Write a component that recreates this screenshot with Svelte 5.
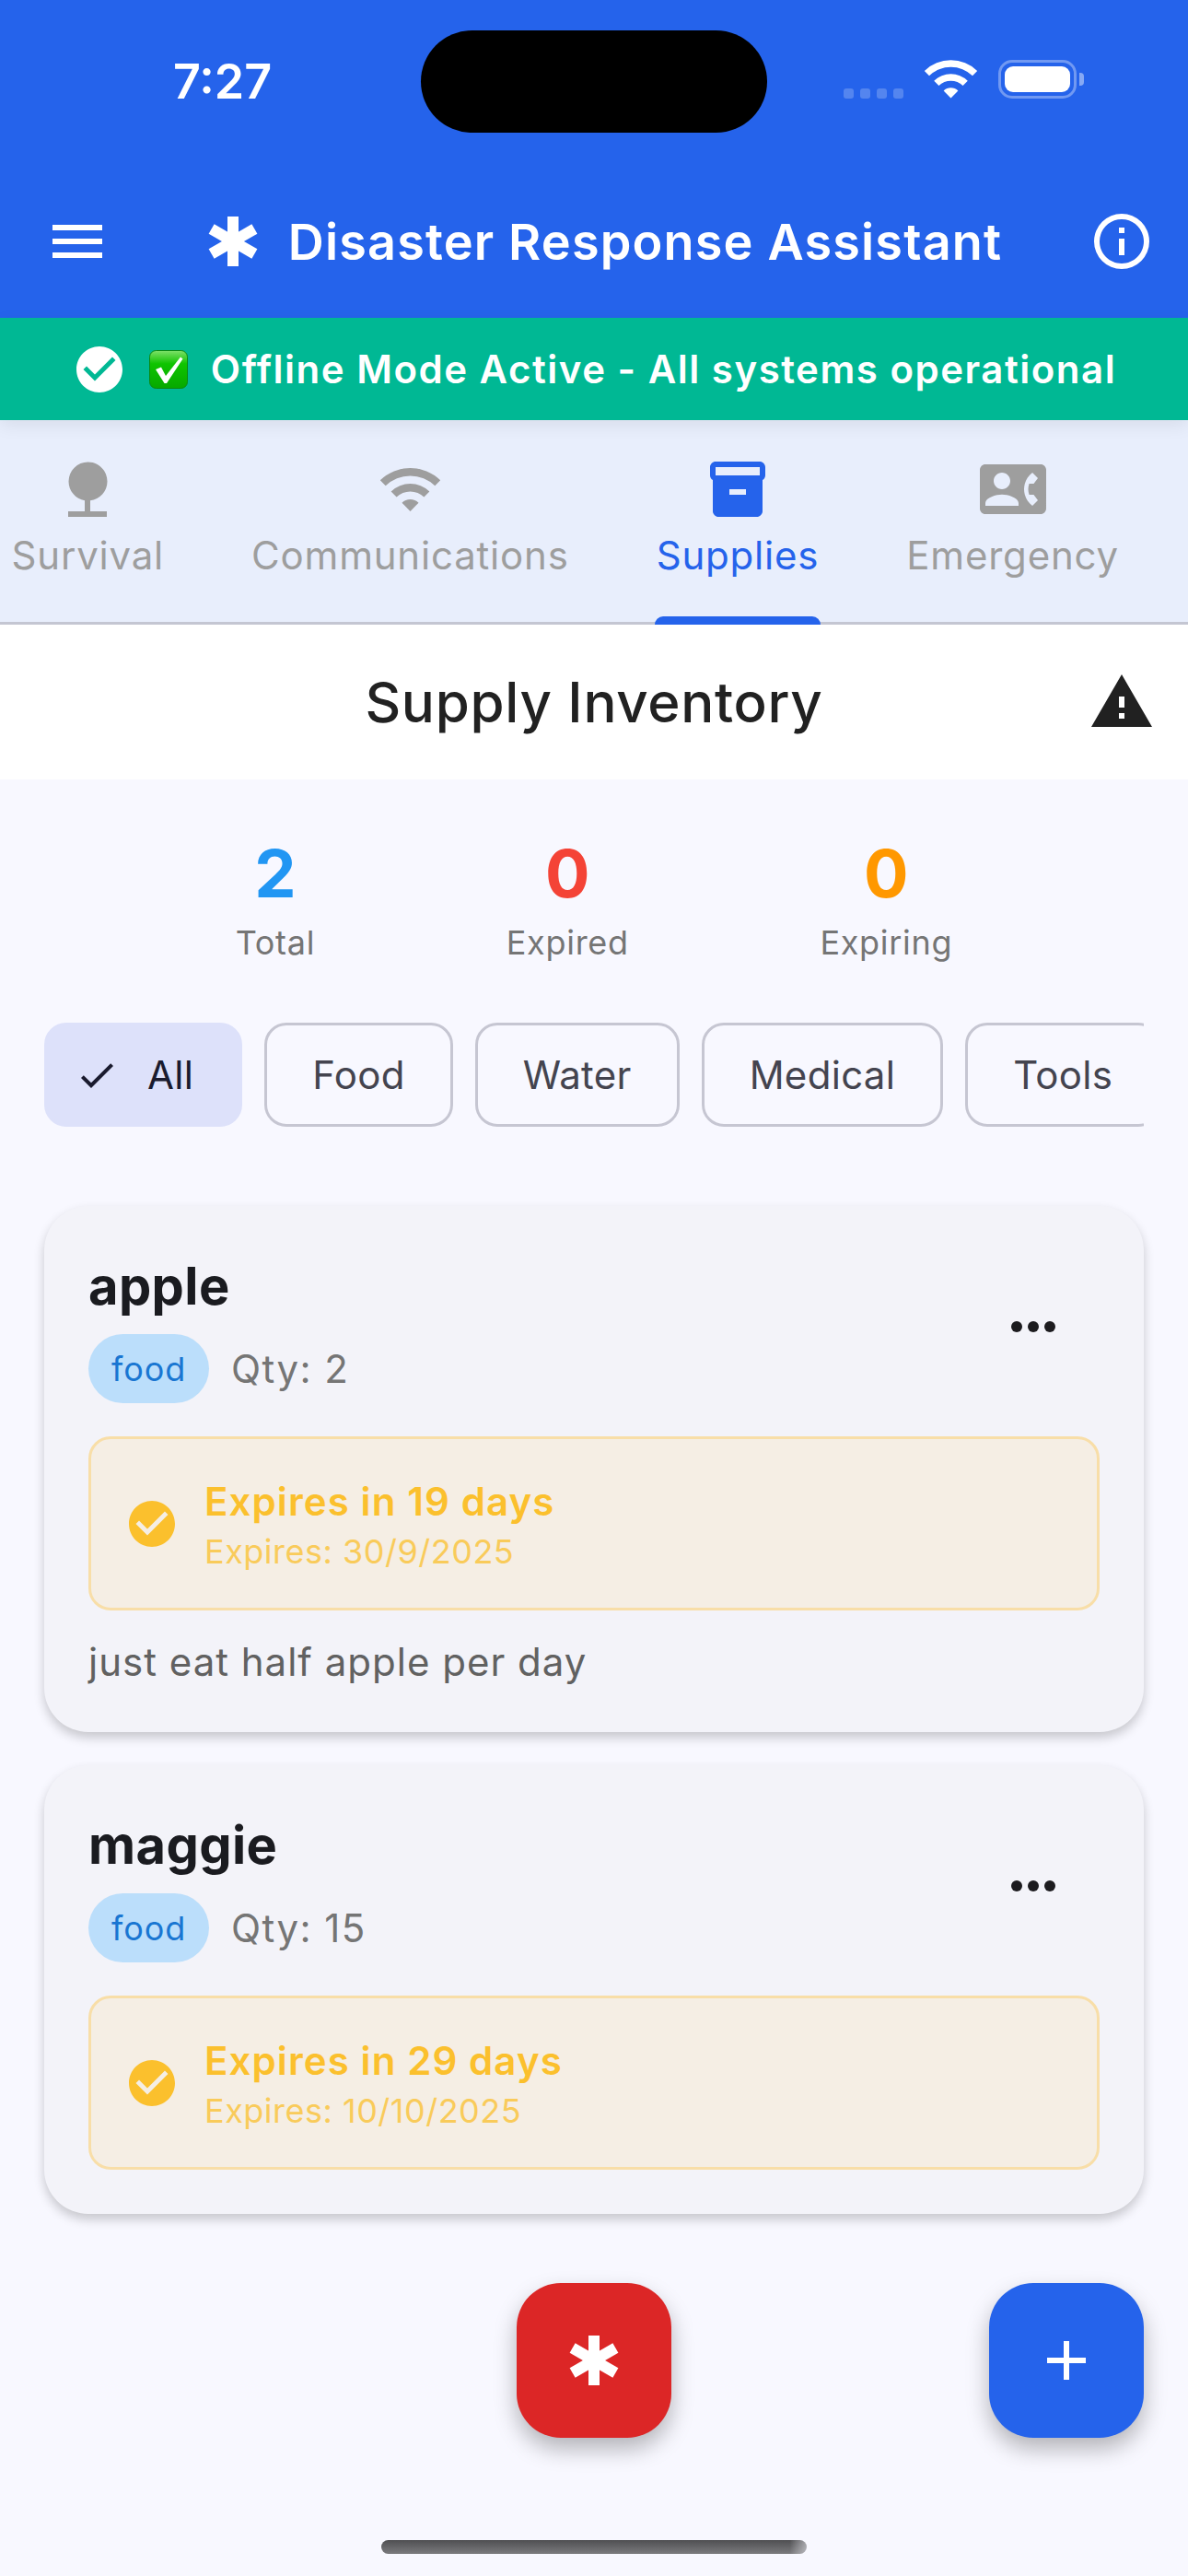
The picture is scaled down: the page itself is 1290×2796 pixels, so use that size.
<script>
  const tabs = [
    { label: 'Survival', d: 'M13 16.12C16.47 15.71 19.17 12.76 19.17 9.17C19.17 5.3 16.04 2.17 12.17 2.17A7 7 0 0 0 5.17 9.17C5.17 12.64 7.69 15.5 11 16.06V20H5V22H19V20H13V16.12Z' },
    { label: 'Communications', wifi: true },
    { label: 'Supplies', active: true, d: 'M20 2H4c-1 0-2 .9-2 2v3.01c0 .72.43 1.34 1 1.69V20c0 1.1 1.1 2 2 2h14c.9 0 2-.9 2-2V8.7c.57-.35 1-.97 1-1.69V4c0-1.1-1-2-2-2zm-5 12H9v-2h6v2zm5-7H4V4h16v3z' },
    { label: 'Emergency', d: 'M22 3H2C.9 3 0 3.9 0 5v14c0 1.1.9 2 2 2h20c1.1 0 1.99-.9 1.99-2L24 5c0-1.1-.9-2-2-2zM8 6c1.66 0 3 1.34 3 3s-1.34 3-3 3-3-1.34-3-3 1.34-3 3-3zm6 12H2v-1c0-2 4-3.1 6-3.1s6 1.1 6 3.1v1zm3.85-4h1.64L21 16l-1.99 1.99c-1.31-.98-2.28-2.38-2.73-3.99-.18-.64-.28-1.31-.28-2s.1-1.36.28-2c.45-1.62 1.42-3.01 2.73-3.99L21 8l-1.51 2h-1.64c-.22.63-.35 1.3-.35 2s.13 1.37.35 2z' }
  ];

  const stats = [
    { value: 2, label: 'Total', color: '#2196f3' },
    { value: 0, label: 'Expired', color: '#f44336' },
    { value: 0, label: 'Expiring', color: '#ff9800' }
  ];

  const filters = ['All', 'Food', 'Water', 'Medical', 'Tools'];

  const supplies = [
    { name: 'apple', qty: 2, left: 'Expires in 19 days', date: 'Expires: 30/9/2025', note: 'just eat half apple per day' },
    { name: 'maggie', qty: 15, left: 'Expires in 29 days', date: 'Expires: 10/10/2025' }
  ];

  const checkCircle = 'M12 2C6.5 2 2 6.5 2 12S6.5 22 12 22 22 17.5 22 12 17.5 2 12 2M10 17L5 12L6.41 10.59L10 14.17L17.59 6.58L19 8L10 17Z';
</script>

{#snippet wifi(cls)}
  <svg class={cls} viewBox="0 0 65 47" fill="currentColor" aria-hidden="true">
    <path d="M-.2 13.2A47 47 0 0 1 65.2 13.2L59.3 19.3A38.5 38.5 0 0 0 5.7 19.3Z" />
    <path d="M11.65 25.4A30 30 0 0 1 53.35 25.4L47.4 31.5A21.5 21.5 0 0 0 17.6 31.5Z" />
    <path d="M23.5 37.65A13 13 0 0 1 41.5 37.65L32.5 47Z" />
  </svg>
{/snippet}

{#snippet star(cls)}
  <svg class={cls} viewBox="0 0 54 54" fill="#fff" aria-hidden="true">
    <rect x="21" y="0" width="12" height="54" />
    <rect x="21" y="0" width="12" height="54" transform="rotate(60 27 27)" />
    <rect x="21" y="0" width="12" height="54" transform="rotate(-60 27 27)" />
  </svg>
{/snippet}

<div class="page">
  <header class="top">
    <div class="status">
      <span class="time">7:27</span>
      <div class="island"></div>
      <div class="signal">
        <i></i><i></i><i></i><i></i>
      </div>
      {@render wifi('status-wifi')}
      <div class="battery"><div class="charge"></div></div>
      <div class="battery-cap"></div>
    </div>
    <div class="appbar">
      <svg class="icon" viewBox="0 0 24 24" fill="#fff"><path d="M3,6H21V8H3V6M3,11H21V13H3V11M3,16H21V18H3V16Z" /></svg>
      <div class="brand">
        <div class="brand-star">{@render star('star')}</div>
        <h1>Disaster Response Assistant</h1>
      </div>
      <svg class="icon" viewBox="0 0 24 24" fill="#fff"><path d="M11,9H13V7H11M12,20C7.59,20 4,16.41 4,12C4,7.59 7.59,4 12,4C16.41,4 20,7.59 20,12C20,16.41 16.41,20 12,20M12,2A10,10 0 0,0 2,12A10,10 0 0,0 12,22A10,10 0 0,0 22,12A10,10 0 0,0 12,2M11,17H13V11H11V17Z" /></svg>
    </div>
  </header>

  <div class="banner">
    <svg class="banner-icon" viewBox="0 0 24 24" fill="#fff"><path d={checkCircle} /></svg>
    <svg class="emoji" viewBox="0 0 42 42" aria-hidden="true">
      <defs>
        <linearGradient id="emoji-fill" x1="0" y1="0" x2="0" y2="1">
          <stop offset="0" stop-color="#7fe06a" />
          <stop offset="0.35" stop-color="#0fc400" />
          <stop offset="1" stop-color="#06a800" />
        </linearGradient>
      </defs>
      <rect x="0.5" y="0.5" width="41" height="41" rx="7" fill="url(#emoji-fill)" stroke="#0b8a12" />
      <path d="M7 21L13 18.5L18 28L34 7.5L36.5 9.5L19 36H16.5Z" fill="#fff" />
    </svg>
    <span>Offline Mode Active - All systems operational</span>
  </div>

  <nav class="tabs">
    <div class="tabs-row">
      {#each tabs as tab}
        <div class="tab" class:active={tab.active}>
          {#if tab.wifi}
            <div class="tab-icon">{@render wifi('tab-wifi')}</div>
          {:else}
            <svg class="tab-icon" viewBox="0 0 24 24" fill="currentColor"><path d={tab.d} /></svg>
          {/if}
          <span class="tab-label">{tab.label}</span>
          {#if tab.active}<div class="indicator"></div>{/if}
        </div>
      {/each}
    </div>
  </nav>

  <div class="titlebar">
    <span></span>
    <h2>Supply Inventory</h2>
    <svg class="icon warn" viewBox="0 0 24 24" fill="#212121"><path d="M1 21h22L12 2 1 21zm12-3h-2v-2h2v2zm0-4h-2v-4h2v4z" /></svg>
  </div>

  <main class="content">
    <div class="stats">
      {#each stats as stat}
        <div class="stat">
          <div class="stat-value" style="color: {stat.color}">{stat.value}</div>
          <div class="stat-label">{stat.label}</div>
        </div>
      {/each}
    </div>

    <div class="chips">
      {#each filters as filter, i}
        <div class="chip" class:selected={i === 0}>
          {#if i === 0}
            <svg class="chip-check" viewBox="0 0 24 24" fill="#1a1b2e"><path d="M21,7L9,19L3.5,13.5L4.91,12.09L9,16.17L19.59,5.59L21,7Z" /></svg>
          {/if}
          {filter}
        </div>
      {/each}
    </div>

    <div class="cards">
      {#each supplies as item}
        <article class="card">
          <div class="card-head">
            <div class="card-info">
              <h3>{item.name}</h3>
              <div class="meta">
                <span class="badge">food</span>
                <span class="qty">Qty: {item.qty}</span>
              </div>
            </div>
            <svg class="icon" viewBox="0 0 24 24" fill="#1c1b1f"><circle cx="6" cy="12" r="2" /><circle cx="12" cy="12" r="2" /><circle cx="18" cy="12" r="2" /></svg>
          </div>
          <div class="expiry">
            <svg class="expiry-icon" viewBox="0 0 24 24" fill="#fbc02d"><path d={checkCircle} /></svg>
            <div class="expiry-text">
              <div class="expiry-title">{item.left}</div>
              <div class="expiry-date">{item.date}</div>
            </div>
          </div>
          {#if item.note}<p class="note">{item.note}</p>{/if}
        </article>
      {/each}
    </div>
  </main>

  <button class="fab sos" aria-label="Emergency">{@render star('fab-star')}</button>
  <button class="fab add" aria-label="Add supply">
    <svg viewBox="0 0 42 42" width="42" height="42" fill="#fff"><path d="M18 0h6v18h18v6H24v18h-6V24H0v-6h18z" /></svg>
  </button>
  <div class="home-bar"></div>
</div>

<style>
  :global(body) {
    margin: 0;
    background: #f8f8ff;
  }

  .page {
    position: relative;
    width: 1290px;
    height: 2796px;
    overflow: hidden;
    background: #f8f8ff;
    font-family: Inter, "Liberation Sans", sans-serif;
  }

  .top {
    height: 345px;
    background: #2563eb;
    color: #fff;
  }

  .status {
    height: 225px;
    box-sizing: border-box;
    padding-top: 33px;
    padding-left: 188px;
    display: flex;
    align-items: flex-start;
  }

  .time {
    width: 269px;
    margin-top: 26px;
    font-size: 52px;
    line-height: 60px;
    font-weight: 600;
  }

  .island {
    width: 376px;
    height: 111px;
    border-radius: 56px;
    background: #000;
  }

  .signal {
    display: flex;
    gap: 7px;
    margin: 63px 0 0 83px;
  }

  .signal i {
    width: 11px;
    height: 11px;
    border-radius: 3px;
    background: rgba(255, 255, 255, 0.22);
  }

  .status-wifi {
    width: 57px;
    height: 42px;
    margin: 32px 0 0 23px;
    overflow: visible;
  }

  .battery {
    width: 85px;
    height: 42px;
    box-sizing: border-box;
    margin: 32px 0 0 23px;
    padding: 4px;
    border: 3px solid rgba(255, 255, 255, 0.35);
    border-radius: 15px;
  }

  .charge {
    height: 100%;
    border-radius: 9px;
    background: #fff;
  }

  .battery-cap {
    width: 5px;
    height: 14px;
    margin: 46px 0 0 3px;
    border-radius: 0 4px 4px 0;
    background: rgba(255, 255, 255, 0.45);
  }

  .appbar {
    display: flex;
    align-items: center;
    padding: 0 36px 0 48px;
  }

  .icon {
    flex-shrink: 0;
    width: 72px;
    height: 72px;
  }

  .brand {
    flex: 1;
    display: flex;
    align-items: center;
    justify-content: center;
    gap: 24px;
    padding-left: 3px;
  }

  .brand-star {
    width: 72px;
    height: 72px;
    display: flex;
    align-items: center;
    justify-content: center;
  }

  .star {
    width: 54px;
    height: 54px;
  }

  h1 {
    margin: 2px 0 0;
    font-size: 54px;
    line-height: 72px;
    font-weight: 600;
    letter-spacing: 1.15px;
    white-space: nowrap;
  }

  .banner {
    position: relative;
    z-index: 1;
    height: 111px;
    display: flex;
    align-items: center;
    justify-content: center;
    gap: 24px;
    background: #00b894;
    box-shadow: 0 6px 18px rgba(0, 0, 0, 0.07);
    color: #fff;
    font-size: 42px;
    font-weight: 600;
    letter-spacing: 1.5px;
  }

  .banner-icon {
    width: 60px;
    height: 60px;
  }

  .emoji {
    width: 42px;
    height: 42px;
    margin-right: 1px;
  }

  .tabs {
    position: relative;
    height: 222px;
    box-sizing: border-box;
    background: #e8eefc;
    border-bottom: 3px solid #c4c6d2;
  }

  .tabs-row {
    display: flex;
    margin-left: -35px;
    padding-top: 39px;
  }

  .tab {
    position: relative;
    flex-shrink: 0;
    display: flex;
    flex-direction: column;
    align-items: center;
    height: 180px;
    padding: 0 47.5px;
    color: #9e9e9e;
  }

  .tab.active {
    color: #2563eb;
  }

  .tab-icon {
    width: 72px;
    height: 72px;
    display: flex;
    align-items: center;
    justify-content: center;
  }

  .tab-wifi {
    width: 65px;
    height: 47px;
    overflow: visible;
  }

  .tab-label {
    margin-top: 8px;
    font-size: 42px;
    line-height: 56px;
    letter-spacing: 0.8px;
    white-space: nowrap;
  }

  .indicator {
    position: absolute;
    left: 45.5px;
    right: 45.5px;
    bottom: -3px;
    height: 9px;
    border-radius: 9px 9px 0 0;
    background: #2563eb;
  }

  .titlebar {
    height: 168px;
    box-sizing: border-box;
    padding: 0 36px;
    display: grid;
    grid-template-columns: 1fr auto 1fr;
    align-items: center;
    background: #fff;
  }

  h2 {
    margin: 0;
    font-size: 60px;
    font-weight: 500;
    letter-spacing: 0.7px;
    color: #212121;
  }

  .warn {
    justify-self: end;
  }

  .content {
    padding: 60px 48px 0;
  }

  .stats {
    display: flex;
    justify-content: space-evenly;
  }

  .stat {
    text-align: center;
  }

  .stat-value {
    font-size: 72px;
    line-height: 84px;
    font-weight: 700;
  }

  .stat-label {
    margin-top: 9px;
    font-size: 36px;
    line-height: 48px;
    letter-spacing: 0.7px;
    color: #757575;
  }

  .chips {
    display: flex;
    gap: 24px;
    margin-top: 63px;
    overflow: hidden;
  }

  .chip {
    flex-shrink: 0;
    height: 113px;
    box-sizing: border-box;
    padding: 0 49px;
    display: flex;
    align-items: center;
    border: 3px solid #c6c6d2;
    border-radius: 24px;
    font-size: 42px;
    letter-spacing: 0.3px;
    color: #44444f;
  }

  .chip.selected {
    padding: 0 50px 0 30px;
    border-color: #dde1fa;
    background: #dde1fa;
    color: #1a1b2e;
  }

  .chip-check {
    width: 48px;
    height: 48px;
    margin-right: 31px;
  }

  .cards {
    display: flex;
    flex-direction: column;
    gap: 36px;
    margin-top: 86px;
  }

  .card {
    padding: 48px;
    border-radius: 48px;
    background: #f3f3f9;
    box-shadow: 0 6px 12px rgba(0, 0, 0, 0.2);
  }

  .card-head {
    display: flex;
    align-items: center;
    justify-content: space-between;
    padding-right: 36px;
  }

  h3 {
    margin: 3px 0 16px;
    font-size: 56px;
    line-height: 72px;
    font-weight: 700;
    letter-spacing: 0.4px;
    color: #1a1b20;
  }

  .meta {
    display: flex;
    align-items: center;
    gap: 24px;
  }

  .badge {
    height: 75px;
    box-sizing: border-box;
    padding: 0 25px;
    display: flex;
    align-items: center;
    border-radius: 38px;
    background: #bbdefb;
    color: #1976d2;
    font-size: 36px;
    letter-spacing: 0.9px;
  }

  .qty {
    font-size: 42px;
    letter-spacing: 1.4px;
    color: #757575;
  }

  .expiry {
    height: 189px;
    box-sizing: border-box;
    margin-top: 36px;
    padding-left: 36px;
    display: flex;
    align-items: center;
    gap: 27px;
    border: 3px solid #f8dea8;
    border-radius: 24px;
    background: #f5eee4;
  }

  .expiry-icon {
    width: 60px;
    height: 60px;
  }

  .expiry-text {
    padding-top: 3px;
  }

  .expiry-title {
    font-size: 42px;
    line-height: 54px;
    font-weight: 600;
    letter-spacing: 1.1px;
    color: #fbc02d;
  }

  .expiry-date {
    margin-top: 3px;
    font-size: 36px;
    line-height: 48px;
    letter-spacing: 0.5px;
    color: #fbc02d;
    opacity: 0.75;
  }

  .note {
    margin: 27px 0 0;
    font-size: 42px;
    line-height: 57px;
    letter-spacing: 1px;
    color: #616161;
  }

  .fab {
    position: absolute;
    top: 2478px;
    width: 168px;
    height: 168px;
    padding: 0;
    display: flex;
    align-items: center;
    justify-content: center;
    border: 0;
    border-radius: 48px;
    box-shadow: 0 12px 24px rgba(0, 0, 0, 0.28);
  }

  .sos {
    left: 561px;
    background: #dc2626;
  }

  .add {
    left: 1074px;
    background: #2563eb;
  }

  .fab-star {
    width: 54px;
    height: 54px;
  }

  .home-bar {
    position: absolute;
    left: 414px;
    top: 2757px;
    width: 462px;
    height: 15px;
    border-radius: 8px;
    background: linear-gradient(90deg, transparent 96%, rgba(248, 248, 255, 0.5)), linear-gradient(180deg, #4f4f52, #7b7b7e);
  }
</style>
